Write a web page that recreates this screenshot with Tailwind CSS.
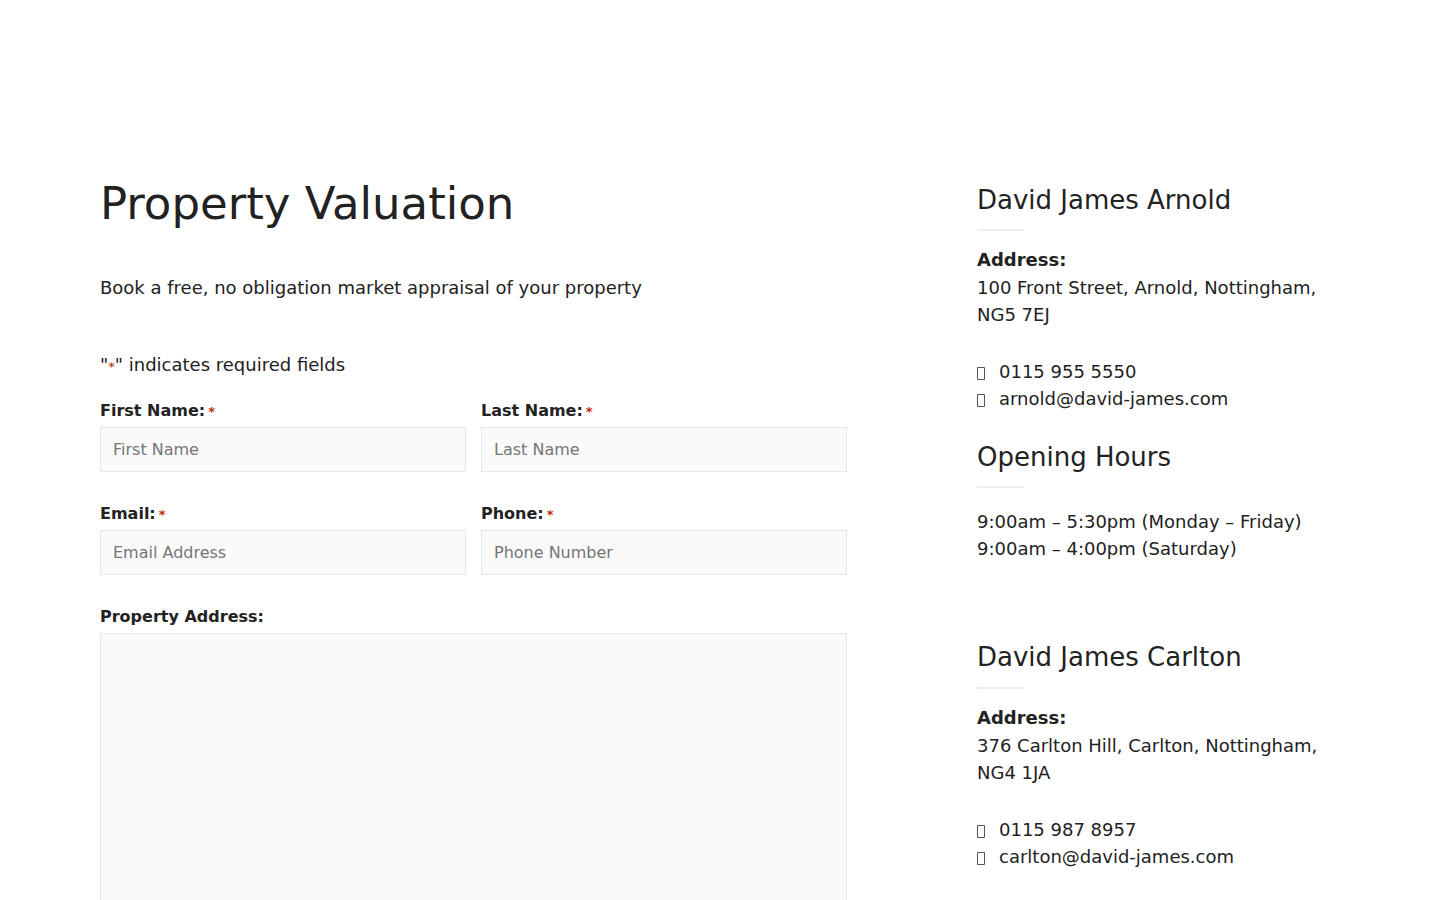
<!DOCTYPE html>
<html lang="en">
<head>
<meta charset="utf-8">
<title>Property Valuation</title>
<script src="https://cdn.jsdelivr.net/npm/@tailwindcss/browser@4"></script>
</head>
<body class="bg-white font-['DejaVu_Sans',sans-serif] text-lg leading-[27px] text-[#222]">
<main class="flex h-screen items-start overflow-hidden px-[100px] pt-[175px]">
  <section class="min-w-0 grow">
    <h1 class="text-[45px] leading-[58px]">Property Valuation</h1>
    <p class="mt-[41px]">Book a free, no obligation market appraisal of your property</p>
    <form class="mt-[50px]">
      <p>"<span class="text-[13px] text-[#c02b0a]">*</span>" indicates required fields</p>
      <div class="mt-5 grid grid-cols-2 gap-x-[15px] gap-y-[31px] text-base leading-[21px]">
        <div>
          <label for="first" class="block h-[21px] font-bold">First Name:<span class="ml-[3px] text-[13px] text-[#c02b0a]">*</span></label>
          <input id="first" type="text" placeholder="First Name" class="mt-[6px] block h-[45px] w-full border border-[#e6e6e6] bg-[#fafafa] px-3 placeholder:text-[#757575]">
        </div>
        <div>
          <label for="last" class="block h-[21px] font-bold">Last Name:<span class="ml-[3px] text-[13px] text-[#c02b0a]">*</span></label>
          <input id="last" type="text" placeholder="Last Name" class="mt-[6px] block h-[45px] w-full border border-[#e6e6e6] bg-[#fafafa] px-3 placeholder:text-[#757575]">
        </div>
        <div>
          <label for="email" class="block h-[21px] font-bold">Email:<span class="ml-[3px] text-[13px] text-[#c02b0a]">*</span></label>
          <input id="email" type="email" placeholder="Email Address" class="mt-[6px] block h-[45px] w-full border border-[#e6e6e6] bg-[#fafafa] px-3 placeholder:text-[#757575]">
        </div>
        <div>
          <label for="phone" class="block h-[21px] font-bold">Phone:<span class="ml-[3px] text-[13px] text-[#c02b0a]">*</span></label>
          <input id="phone" type="tel" placeholder="Phone Number" class="mt-[6px] block h-[45px] w-full border border-[#e6e6e6] bg-[#fafafa] px-3 placeholder:text-[#757575]">
        </div>
        <div class="col-span-2">
          <label for="address" class="block h-[21px] font-bold">Property Address:</label>
          <textarea id="address" class="mt-[6px] block h-[288px] w-full resize-none border border-[#e6e6e6] bg-[#fafafa] px-3 py-2"></textarea>
        </div>
      </div>
    </form>
  </section>
  <aside class="ml-[130px] w-[363px] shrink-0 pt-2">
    <section>
      <h2 class="text-[26px] leading-[34px]">David James Arnold</h2>
      <div class="mt-3 h-[2px] w-[47px] bg-[#eee]"></div>
      <p class="mt-[15px] font-bold">Address:</p>
      <p class="mt-px">100 Front Street, Arnold, Nottingham, NG5 7EJ</p>
      <ul class="mt-[30px]">
        <li class="flex items-center gap-[14px]"><svg class="mt-[3px] h-[13px] w-2" viewBox="0 0 8 13" fill="none" stroke="#555" aria-hidden="true"><path d="M.5.5h7v12h-7z"/></svg><a href="tel:01159555550">0115 955 5550</a></li>
        <li class="flex items-center gap-[14px]"><svg class="mt-[3px] h-[13px] w-2" viewBox="0 0 8 13" fill="none" stroke="#555" aria-hidden="true"><path d="M.5.5h7v12h-7z"/></svg><a href="mailto:arnold@david-james.com">arnold@david-james.com</a></li>
      </ul>
      <h2 class="mt-7 text-[26px] leading-[34px]">Opening Hours</h2>
      <div class="mt-3 h-[2px] w-[47px] bg-[#eee]"></div>
      <p class="mt-5">9:00am – 5:30pm (Monday – Friday)<br>9:00am – 4:00pm (Saturday)</p>
    </section>
    <section class="mt-[78px]">
      <h2 class="text-[26px] leading-[34px]">David James Carlton</h2>
      <div class="mt-[13px] h-[2px] w-[47px] bg-[#eee]"></div>
      <p class="mt-[15px] font-bold">Address:</p>
      <p class="mt-px">376 Carlton Hill, Carlton, Nottingham, NG4 1JA</p>
      <ul class="mt-[30px]">
        <li class="flex items-center gap-[14px]"><svg class="mt-[3px] h-[13px] w-2" viewBox="0 0 8 13" fill="none" stroke="#555" aria-hidden="true"><path d="M.5.5h7v12h-7z"/></svg><a href="tel:01159878957">0115 987 8957</a></li>
        <li class="flex items-center gap-[14px]"><svg class="mt-[3px] h-[13px] w-2" viewBox="0 0 8 13" fill="none" stroke="#555" aria-hidden="true"><path d="M.5.5h7v12h-7z"/></svg><a href="mailto:carlton@david-james.com">carlton@david-james.com</a></li>
      </ul>
    </section>
  </aside>
</main>
</body>
</html>
